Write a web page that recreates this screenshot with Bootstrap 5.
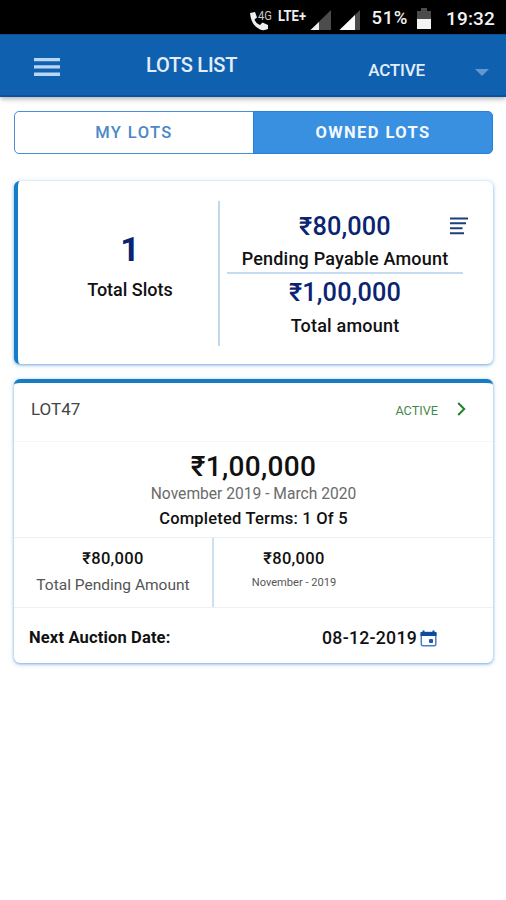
<!DOCTYPE html>
<html lang="en">
<head>
<meta charset="utf-8">
<meta name="viewport" content="width=device-width, initial-scale=1">
<title>Lots List</title>
<link href="https://cdn.jsdelivr.net/npm/bootstrap@5.3.0/dist/css/bootstrap.min.css" rel="stylesheet">
<style>
body{font-family:Roboto,"Noto Sans",sans-serif;background:#fff;color:#111;min-height:900px}
.t{white-space:nowrap;line-height:1;display:block}
.medium{font-weight:500}
.status-bar{height:34px;background:#000;color:#f2f2f2;padding:3px 11px 0 0}
.battery-text{font-size:18.5px;letter-spacing:.6px;margin-left:12px}
.clock{font-size:19px;letter-spacing:.15px}
.battery{margin:0 15px 0 9px}
.app-bar{height:63px;background:#0f61af;border-top:1px solid #0b4f92;border-bottom:2px solid #0c519f;box-shadow:0 2px 5px rgba(0,0,0,.3);padding:0 17px 0 34px}
.title{font-size:20px;letter-spacing:-.25px;color:#e4eefb;margin:-1px 0 0 86px}
.filter{font-size:17px;letter-spacing:-.15px;color:#e4eefb;margin-top:10px}
.caret{margin:14px 0 0 50px}
.tabs{margin:14px 13px 0 14px;height:43px}
.tabs .btn{border:1px solid #4a8fd6;border-radius:5px;font-size:16.5px;letter-spacing:1.4px;line-height:1;color:#4a88c6;padding:2px 0 0}
.tabs .btn.active{background:#3990e1;border-color:#2383d8;color:#f3f9ff;font-weight:700}
.panel{margin:0 13px 0 14px;background:#fff;border-radius:6px;box-shadow:0 1px 3px rgba(50,130,205,.6),0 1px 6px rgba(120,175,225,.3)}
.summary{margin-top:27px;height:183px;border-left:4px solid #147dc8;position:relative}
.slots{width:200px;padding-left:24px}
.slots-count{font-size:34px;margin-top:51px}
.caption-text{font-size:18px}
.slots .caption-text{margin-top:15px}
.vline{width:2px;height:145px;background:#c1d8ec;margin-top:20px}
.amounts{width:250px;padding:33px 0 0}
.amounts .figure-text{font-size:25.3px;letter-spacing:.15px}
.amounts .caption-text{margin-top:11px;letter-spacing:.2px}
.navy{color:#0b2472}
.hline{height:2px;width:236px;background:#c5dcf0;margin:4px 0 6px}
.menu-lines{position:absolute;right:25px;top:36px}
.lot{margin-top:15px;height:284px;border-top:4px solid #187cc4}
.lot-head{height:59px;border-bottom:1px solid #f6f6f8;padding:0 27px 6px 17px}
.lot-name{font-size:17px;color:#444}
.lot-state{font-size:12.7px;color:#45894a;margin:4px 19px 0 0}
.lot-main{height:96px;border-bottom:1px solid #efeff2;padding-top:11px}
.lot-total{font-size:28px;letter-spacing:.3px}
.lot-range{font-size:15.6px;color:#6b6b6b;margin-top:6px}
.lot-terms{font-size:16.5px;letter-spacing:.22px;margin-top:8px}
.lot-split{height:70px;border-bottom:1px solid #efeff2}
.cell-left{width:200px;border-right:2px solid #cddff2;padding-top:13px}
.cell-right{width:160px;padding-top:13px}
.cell-amount{font-size:16.5px;letter-spacing:.3px}
.cell-caption{font-size:15.5px;color:#555;margin-top:10px}
.cell-month{font-size:11.1px;color:#555;margin-top:9px}
.lot-foot{height:55px;padding:6px 56px 0 15px}
.foot-label{font-size:16.5px;letter-spacing:.15px}
.foot-date{font-size:17.7px;letter-spacing:.25px}
.calendar{margin-left:3px}
</style>
</head>
<body>
<div class="status-bar d-flex align-items-center justify-content-end">
  <svg class="flex-shrink-0" width="110" height="28" viewBox="0 3 110 28"><path d="M0 11l5-1 2 5.500-2.500 2q1.500 4 5.500 5.500l2.500-2.500 5.500 2.500v4q-4 2-8 .500Q1 23.500 0 11z" fill="#eee"/><text x="8" y="17.500" font-size="13" textLength="14" lengthAdjust="spacingAndGlyphs" fill="#c8c8c8">4G</text><text x="28" y="18.500" font-size="14" font-weight="700" textLength="28" lengthAdjust="spacingAndGlyphs" fill="#eee">LTE+</text><path d="M81 8v20H60.500z" fill="#4c4c4c"/><path d="M69 20v8h-8.500z" fill="#eee"/><path d="M110 8v20H89.500z" fill="#4c4c4c"/><path d="M105 13v15H89.500z" fill="#fff"/></svg>
  <span class="t medium battery-text">51%</span>
  <svg class="battery flex-shrink-0" width="14" height="22" viewBox="0 0 14 22"><path d="M4 0h6v3h4v8H0V3h4z" fill="#4c4c4c"/><path d="M0 11h14v10H0z" fill="#f4f4f4"/></svg>
  <span class="t medium clock">19:32</span>
</div>
<nav class="app-bar d-flex align-items-center">
  <svg class="mt-1" width="26" height="19" viewBox="0 0 26 19" fill="#b9d6f4"><path d="M0 0h26v3.300H0zM0 7.300h26v3.300H0zM0 14.600h26v3.300H0z"/></svg>
  <span class="t medium title">LOTS LIST</span>
  <span class="t medium filter ms-auto">ACTIVE</span>
  <svg class="caret" width="14" height="7" viewBox="0 0 14 7"><path d="M0 0h14L7 7z" fill="#6198d0"/></svg>
</nav>
<main>
<div class="btn-group tabs d-flex">
  <button type="button" class="btn medium w-50">MY LOTS</button>
  <button type="button" class="btn active w-50">OWNED LOTS</button>
</div>
<section class="panel summary d-flex">
  <div class="slots d-flex flex-column align-items-center">
    <span class="t fw-bold navy slots-count">1</span>
    <span class="t medium caption-text">Total Slots</span>
  </div>
  <div class="vline"></div>
  <div class="amounts d-flex flex-column align-items-center">
    <span class="t medium navy figure-text">₹80,000</span>
    <span class="t medium caption-text">Pending Payable Amount</span>
    <div class="hline"></div>
    <span class="t medium navy figure-text">₹1,00,000</span>
    <span class="t medium caption-text">Total amount</span>
  </div>
  <svg class="menu-lines" width="19" height="18" viewBox="0 0 19 18"><path d="M1 1.500h18M1 6.200h16M1 11.200h12.500M1 16.200h14" stroke="#1d3f7d" stroke-width="2"/></svg>
</section>
<section class="panel lot">
  <div class="lot-head d-flex align-items-center">
    <span class="t lot-name">LOT47</span>
    <span class="t lot-state ms-auto">ACTIVE</span>
    <svg width="9" height="14" viewBox="0 0 9 14"><path d="M1.200 1l6 6-6 6" fill="none" stroke="#22832a" stroke-width="2"/></svg>
  </div>
  <div class="lot-main d-flex flex-column align-items-center">
    <span class="t medium lot-total">₹1,00,000</span>
    <span class="t lot-range">November 2019 - March 2020</span>
    <span class="t medium lot-terms">Completed Terms: 1 Of 5</span>
  </div>
  <div class="lot-split d-flex">
    <div class="cell-left d-flex flex-column align-items-center">
      <span class="t medium cell-amount">₹80,000</span>
      <span class="t cell-caption">Total Pending Amount</span>
    </div>
    <div class="cell-right d-flex flex-column align-items-center">
      <span class="t medium cell-amount">₹80,000</span>
      <span class="t cell-month">November - 2019</span>
    </div>
  </div>
  <div class="lot-foot d-flex align-items-center">
    <span class="t fw-bold foot-label">Next Auction Date:</span>
    <span class="t medium foot-date ms-auto">08-12-2019</span>
    <svg class="calendar" width="17" height="17" viewBox="0 0 17 17"><rect x="1.300" y="2.500" width="14.500" height="13.300" rx="1.500" fill="none" stroke="#4a7fc8" stroke-width="1.500"/><path d="M.500 2h2V.500h2V2h8V.500h2V2h2v4H.500z" fill="#124a9c"/><rect x="9" y="9" width="4" height="4" rx="1" fill="#2257ac"/></svg>
  </div>
</section>
</main>
<script src="https://cdn.jsdelivr.net/npm/bootstrap@5.3.0/dist/js/bootstrap.bundle.min.js"></script>
</body>
</html>
